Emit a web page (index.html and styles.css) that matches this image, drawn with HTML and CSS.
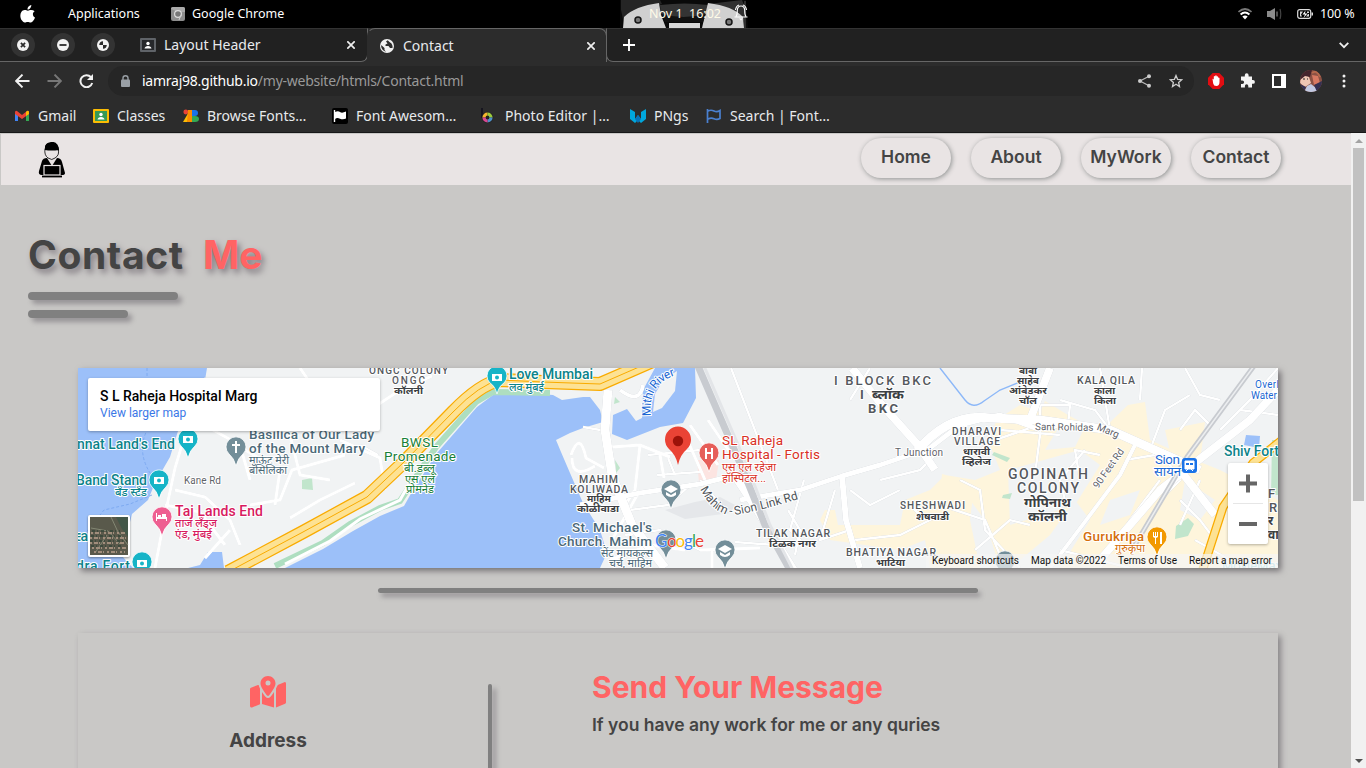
FILE: index.html
```html
<!DOCTYPE html>
<html lang="en">
<head>
<meta charset="utf-8">
<title>Contact</title>
<link rel="stylesheet" href="styles.css">
</head>
<body>
<div class="desktop">
  <div class="sysbar">
    <svg class="apple" width="16" height="18" viewBox="0 0 16 18"><path fill="#fff" d="M11.3 0c.1 1.3-.4 2.400-1.100 3.200-.7.800-1.700 1.400-2.700 1.300-.1-1.200.4-2.400 1.100-3.100C9.300.600 10.400.100 11.300 0zM14.700 6.200c-1.100.700-1.800 1.700-1.800 3 0 1.500.8 2.700 2.100 3.200-.3 1-.8 2-1.400 2.900-.8 1.200-1.600 2.300-2.900 2.300-1.200 0-1.600-.7-3-.7s-1.800.7-2.900.7c-1.300 0-2.200-1.200-3-2.300C.200 13.100-.2 9.600 1.200 7.300c.8-1.400 2.100-2.200 3.500-2.200 1.300 0 2.100.7 3.200.7 1 0 1.700-.7 3.200-.7 1.300 0 2.600.4 3.600 1.100z"/></svg>
    <span class="sys-text apps">Applications</span>
    <svg class="mini-chrome" width="14" height="14" viewBox="0 0 14 14"><rect width="14" height="14" rx="2" fill="#8d8d8d"/><path d="M0 2Q0 0 2 0H12Q14 0 14 2V5H7z" fill="#aaa"/><circle cx="7" cy="7" r="3.400" fill="#777" stroke="#ddd" stroke-width="1.200"/><path d="M10 7.500L8 13" stroke="#ccc"/></svg>
    <span class="sys-text chrome-name">Google Chrome</span>
    <div class="clock">
      <svg class="clock-art" width="130" height="28" viewBox="0 0 130 28"><path d="M0 0H126L128 28H0z" fill="#090909"/><path d="M1 0H40L42 4 12 12 4 24 1 10z" fill="#252525"/><path d="M88 4L122 0 126 10 124 21 118 12z" fill="#303030"/><path d="M40 5Q65 2 88 5L87 17H41z" fill="#343434"/><path d="M3 28L4 17Q15 6 39 3L41 15 46 28zM124 28L123 17Q113 6 88 3L85 15 82 28z" fill="#d0d0d0"/><path d="M49 28V23H80V28z" fill="#d8d8d8"/><path d="M41 14Q64 20 86 14L83 22H45z" fill="#111"/><g fill="#777" stroke="#151515" stroke-width="1.500"><circle cx="18" cy="20" r="3"/><circle cx="109" cy="22" r="3"/></g><path d="M125 1V28" stroke="#555"/></svg>
      <span class="clock-text">Nov 1&nbsp; 16:02</span>
      <svg class="bell" width="14" height="17" viewBox="0 0 14 17"><path d="M2 12.500Q3.300 11 3.300 6.500Q3.500 2 7 2t3.700 4.500Q10.700 11 12 12.500M.5 13H13.500M5 1Q2 2 1.500 6M9 1Q12 2 12.500 6" fill="none" stroke="#fff" stroke-width="1.100"/><path d="M5 14.500H9L7 16.500z" fill="#fff"/></svg>
    </div>
    <div class="tray">
      <svg width="14" height="12" viewBox="0 0 14 12"><path d="M.5 4Q7-2 13.500 4" fill="none" stroke="#777" stroke-width="1.700"/><path d="M2.600 6.500Q7 2.500 11.400 6.500" fill="none" stroke="#fff" stroke-width="2"/><path d="M4.300 8.500Q7 6.300 9.700 8.500L7 11.500z" fill="#fff"/></svg>
      <svg width="15" height="12" viewBox="0 0 15 12"><path d="M0 3H3L8 0V12L3 9H0z" fill="#8a8a8a"/><path d="M10 3.500V8.500" stroke="#777" stroke-width="1.300"/><path d="M13 1Q14.500 6 13 11" stroke="#444" fill="none" stroke-width="1.200"/></svg>
      <svg width="16" height="10" viewBox="0 0 16 10"><rect x=".7" y=".7" width="13" height="8.600" rx="2" fill="none" stroke="#ddd" stroke-width="1.200"/><path d="M14.500 3.500H16V6.500H14.500zM3 2.500H6L4 5.500 5 7.500H3zM12 2.500H10V4H12zM12 7.500H9L11 5H12z" fill="#ddd"/><path d="M8.500 1.500L5.500 5.500H8L6.500 9L10.500 4.500H8z" fill="#fff"/></svg>
      <span class="sys-text pct">100 %</span>
    </div>
  </div>

  <div class="tabs">
    <div class="strip left-strip">
      <span class="winbtn"><svg width="12" height="12" viewBox="0 0 12 12"><circle cx="6" cy="6" r="6" fill="#f3f3f3"/><path d="M3.900 3.900l4.200 4.200M8.100 3.900L3.900 8.100" stroke="#2b2b2b" stroke-width="1.700"/></svg></span>
      <span class="winbtn"><svg width="12" height="12" viewBox="0 0 12 12"><circle cx="6" cy="6" r="6" fill="#f3f3f3"/><path d="M2.500 6h7" stroke="#2b2b2b" stroke-width="1.800"/></svg></span>
      <span class="winbtn"><svg width="12" height="12" viewBox="0 0 12 12"><circle cx="6" cy="6" r="6" fill="#f3f3f3"/><path d="M6 2.200V6H2.200A4 4 0 0 1 6 2.200zM6 6H9.800A4 4 0 0 1 6 9.800z" fill="#2b2b2b"/></svg></span>
      <svg class="tab-ico1" width="16" height="14" viewBox="0 0 16 14"><rect width="16" height="14" rx="1" fill="#5f6368"/><rect x="2" y="2" width="12" height="10" fill="#26282b"/><circle cx="8" cy="5.500" r="1.700" fill="#fff"/><path d="M4.500 10.500Q5 8 8 8t3.500 2.500z" fill="#fff"/></svg>
      <span class="ui-text tab-title">Layout Header</span>
      <svg class="tab-x" width="8" height="8" viewBox="0 0 8 8"><path d="M.3.300l7.400 7.400M7.700.300L.3 7.700" stroke="#eee" stroke-width="1.700"/></svg>
    </div>
    <div class="active-tab">
      <svg width="14" height="14" viewBox="0 0 14 14"><circle cx="7" cy="7" r="7" fill="#f0f0f0"/><path d="M7.700 1.200L6 2.500 7.500 4.500 5.500 5.500V7H8.500L10 9H12.500Q13 7 11.500 4.500L9.500 3zM1.200 6L4.500 9V11L6 12.700Q2 11.500 1.200 8z" fill="#2c2c2c"/></svg>
      <span class="ui-text tab-title2">Contact</span>
      <svg width="8" height="8" viewBox="0 0 8 8"><path d="M.3.300l7.400 7.400M7.700.300L.3 7.700" stroke="#eee" stroke-width="1.700"/></svg>
    </div>
    <div class="strip right-strip">
      <svg width="12" height="12" viewBox="0 0 12 12"><path d="M6 0V12M0 6H12" stroke="#fff" stroke-width="1.900"/></svg>
      <svg width="10" height="7" viewBox="0 0 10 7"><path d="M.7.900L5 5.200 9.300.900" fill="none" stroke="#eee" stroke-width="1.800"/></svg>
    </div>
  </div>

  <div class="toolbar">
    <svg class="nav-ico" width="15" height="14" viewBox="0 0 15 14"><path d="M7.500.600L1.200 7l6.300 6.400M1.500 7H14.500" fill="none" stroke="#f1f1f1" stroke-width="1.900"/></svg>
    <svg class="nav-ico" width="15" height="14" viewBox="0 0 15 14"><path d="M7.500.600L13.800 7l-6.300 6.400M13.500 7H.500" fill="none" stroke="#777" stroke-width="1.900"/></svg>
    <svg class="nav-ico" width="15" height="14" viewBox="0 0 15 14"><path d="M12 3.200A6 6 0 1 0 13.200 9" fill="none" stroke="#f1f1f1" stroke-width="2"/><path d="M14 0V6H8z" fill="#f1f1f1"/></svg>
    <div class="omnibox">
      <svg width="9" height="12" viewBox="0 0 9 12"><rect y="4.500" width="9" height="7.500" rx="1" fill="#9aa0a6"/><path d="M2 5V3Q2 .800 4.500.800T7 3V5" fill="none" stroke="#9aa0a6" stroke-width="1.400"/></svg>
      <span class="ui-text url">iamraj98.github.io<i>/my-website/htmls/Contact.html</i></span>
      <svg width="13" height="14" viewBox="0 0 13 14"><path d="M11 2.200L2 7l9 4.800" fill="none" stroke="#bbb" stroke-width="1.200"/><g fill="#ccc"><circle cx="11" cy="2.200" r="2"/><circle cx="2" cy="7" r="2"/><circle cx="11" cy="11.800" r="2"/></g></svg>
      <svg class="star" width="14" height="14" viewBox="0 0 14 14"><path d="M7 1.500l1.600 3.800 4.100.4-3.100 2.700.9 4.100L7 10.300l-3.500 2.200.9-4.100L1.300 5.700l4.100-.4z" fill="none" stroke="#ccc" stroke-width="1.300"/></svg>
    </div>
    <svg class="ext1" width="16" height="16" viewBox="0 0 16 16"><path d="M4.700 0h6.600L16 4.700v6.600L11.300 16H4.700L0 11.300V4.700z" fill="#e20d12"/><path d="M4.500 6q.7-.5 1.100.3l.2 1V3.500q.8-.8 1.400 0V2.800q.8-.9 1.500 0v.7q.8-.7 1.400.2v1q1-.5 1.400.3V9Q11.500 13 8.300 13 5.600 13 5.200 10.500z" fill="#fff"/></svg>
    <svg class="ext2" width="15" height="15" viewBox="0 0 15 15"><path d="M1 3.500H4.800V2.200a1.900 1.900 0 0 1 3.800 0V3.500H12V7h1a1.900 1.900 0 0 1 0 3.800H12V14.500H8.300V13a1.700 1.700 0 0 0-3.400 0v1.500H1V11h1.300a1.800 1.800 0 0 0 0-3.600H1z" fill="#f4f4f4"/></svg>
    <svg class="ext3" width="14" height="14" viewBox="0 0 14 14"><rect x="1" y="1" width="12" height="12" fill="none" stroke="#fff" stroke-width="2"/><path d="M9 0h5v14H9z" fill="#fff"/></svg>
    <svg class="avatar" width="22" height="22" viewBox="0 0 22 22"><defs><clipPath id="av"><circle cx="11" cy="11" r="11"/></clipPath></defs><g clip-path="url(#av)"><path fill="#8b5144" d="M0 0h22v22H0z"/><path d="M1 7Q5 2 9 7L11 13 5 17 0 13z" fill="#efc6b4"/><path d="M0 0H12L10 7 5 6 0 10z" fill="#45252d"/><path d="M12 5l6 1 2 7-6 2z" fill="#d87962"/><path d="M4 22L7 16 11 14 16 18 18 22z" fill="#c2c9e2"/><path d="M0 14l6 3-2 5H0zM14 15l8-4v11h-5z" fill="#343052"/><path d="M12 3q5-4 8 4" stroke="#b6694d" stroke-width="2" fill="none"/><path d="M3 9h2M7 9h1" stroke="#222"/></g></svg>
    <svg class="dots" width="4" height="14" viewBox="0 0 4 14"><g fill="#f2f2f2"><circle cx="2" cy="2" r="1.500"/><circle cx="2" cy="7" r="1.500"/><circle cx="2" cy="12" r="1.500"/></g></svg>
  </div>

  <div class="bookmarks">
    <div class="bm bm1"><svg width="16" height="16" viewBox="0 0 16 16"><path d="M1 4v9h3V7z" fill="#4285f4"/><path d="M15 4v9h-3V7z" fill="#34a853"/><path d="M1 4.500Q1 2 3 3l5 4 5-4q2-1 2 1.500V6L8 11 1 6z" fill="#ea4335"/><path d="M12 4l1-1q2-1 2 1.500V6l-3 2z" fill="#fbbc04"/></svg><span class="ui-text">Gmail</span></div>
    <div class="bm bm2"><svg width="16" height="16" viewBox="0 0 16 16"><rect y="1" width="16" height="14" rx="1" fill="#fbbc04"/><rect x="2" y="3" width="12" height="10" fill="#379a55"/><circle cx="8" cy="6.500" r="1.700" fill="#fff"/><path d="M4.500 11.500Q5 9 8 9t3.500 2.500z" fill="#fff"/></svg><span class="ui-text">Classes</span></div>
    <div class="bm bm3"><svg width="16" height="16" viewBox="0 0 16 16"><circle cx="2.800" cy="4" r="2.400" fill="#ea4335"/><path d="M7 2h3L4 14H0z" fill="#fbbc04"/><path d="M5 2h4v12H4z" fill="#fb8c00"/><path d="M9 2h3q3 0 3 3t-3 3H9z" fill="#1a73e8"/><path d="M9 8h3q4 0 4 3t-4 3H9z" fill="#34a853"/></svg><span class="ui-text">Browse Fonts…</span></div>
    <div class="bm bm4"><svg width="16" height="16" viewBox="0 0 16 16"><rect width="16" height="16" rx="2" fill="#000"/><path d="M2.500 2v12" stroke="#fff" stroke-width="1.400"/><path d="M3 4q3-1.500 5 0t6-.5v7q-3 1.500-6 .2T3 11z" fill="#fff"/></svg><span class="ui-text">Font Awesom…</span></div>
    <div class="bm bm5"><svg width="16" height="16" viewBox="0 0 16 16"><path d="M1 0V10" stroke="#16151f" stroke-width="2"/><circle cx="6.500" cy="9.500" r="5.800" fill="#222"/><g fill="none" stroke-width="3.200"><path d="M3 9.500A3.500 3.500 0 0 1 6.500 6" stroke="#f3b52d"/><path d="M6.500 6A3.500 3.500 0 0 1 10 9.500" stroke="#9ccc3c"/><path d="M10 9.500A3.500 3.500 0 0 1 6.500 13" stroke="#4e90c9"/><path d="M6.500 13A3.500 3.500 0 0 1 3 9.500" stroke="#d84792"/></g></svg><span class="ui-text">Photo Editor |…</span></div>
    <div class="bm bm6"><svg width="16" height="16" viewBox="0 0 16 16"><path d="M0 1l5 3v7l3-4 3 4V4l5-3v10l-5 4-3-3-3 3-5-4z" fill="#00a6dc"/><path d="M5 11l3-4 3 4-3 4z" fill="#0872b9"/></svg><span class="ui-text">PNgs</span></div>
    <div class="bm bm7"><svg width="16" height="16" viewBox="0 0 16 16"><path d="M1.500 1v14M2 3q3-1.500 6 0t6-.5v8q-3 1.500-6 .2T2 11" fill="none" stroke="#4a80d0" stroke-width="1.700"/></svg><span class="ui-text">Search | Font…</span></div>
  </div>

  <div class="viewport">
    <div class="page">
      <header class="site-head">
        <svg class="logo" width="28" height="36" viewBox="0 0 28 36"><path d="M7 8Q6 1 13 0t8 8l-1 2H8z"/><path d="M7 7Q6 13 10 16t7 0Q22 13 20 7" fill="#e9e4e4" stroke="#000" stroke-width=".8"/><path d="M7 8Q6 1 12 1 20-1 21 8Q13 9 7 8z"/><path d="M9 16L14 24 19 16Q23 16 24 20L27 31Q27 33 24 33H4Q0 33 1 29L4 19Q5 16 9 16z"/><rect x="6" y="23.500" width="16" height="9.500" fill="#000" stroke="#e9e4e4" stroke-width="1.200"/><path d="M4 34.500H24" stroke="#000" stroke-width="1.800"/></svg>
        <nav class="nav"><a>Home</a><a>About</a><a>MyWork</a><a>Contact</a></nav>
      </header>
      <main class="content">
        <h1 class="title"><span class="t-contact">Contact</span><em>Me</em></h1>
        <div class="bar bar-a"></div>
        <div class="bar bar-b"></div>

        <section class="map">
          <svg class="map-art" width="1200" height="200" viewBox="78 368 1200 200">
            <rect x="78" y="368" width="1200" height="200" fill="#f1f3f4"/>
            <!-- built-up areas -->
            <g fill="#fef5dc">
              <path d="M996 420L1020 405 1040 412 1045 401 1068 415 1100 432 1128 405 1145 402 1150 440 1190 458 1220 470 1278 500 1278 568 1060 568 1090 520 1075 500 1050 535 1020 560 1000 568 985 520 970 500 975 480 1000 470 990 445z"/>
              <path d="M825 510L835 510 838 525 900 525 905 500 930 490 945 475 975 480 970 520 980 568 930 568 925 540 900 550 865 545 830 540 820 520zM942 474l12 3-4 8-9-2zM1165 430l40-8-5 40-30-10z"/>
            </g>
            <g fill="#f1f3f4"><path d="M1008 470L1080 450 1100 465 1075 505 1010 525zM1060 425l25 2-10 20-30 3zM1185 480l30 20-15 20-20-10zM1110 500l30-10-10 25-30 10z"/></g>
            <path d="M665 510l30-8 25-5 15 8-5 8-45 6z" fill="#e5e7ea"/>
            <path d="M697 460l22 0-3 20-17 3z" fill="#fce4e1"/>
            <g fill="#c1e5cc"><path d="M302 480l10-2 1 12-11-1z"/><path d="M994 452l16 6-3 4-15-7zM1003 495l9-2-2 6-8-1zM1176 526l12-8 6 6-6 12-13 3zM1272 440h6v55h-7zM615 397l5 5-6 2zM615 460l5 8-4 5z"/></g>
            <!-- water -->
            <g fill="#9cc0f9">
              <path d="M78 368H207L205 380 195 390 178 431 170 457 155 483 148 500 132 514 128 530 130 545 122 556 133 568H78z"/>
              <path d="M188 568L200 565 208 552 222 552 224 568z"/>
              <path d="M285 568L323 549 353 531 380 516 404 506 413 490 437 453 477 407 493 395 513 392 553 395 562 400 583 397 590 397 600 410 603 422 583 428 570 433 556 440 561 452 570 473 583 503 600 530 607 553 600 568z"/>
              <path d="M613 415L627 409 636 421 642 418 643 390 655 368H695L696 398 683 423 660 427 627 440 612 434z"/>
              <path d="M1246 435l14 1-1 12-15-3z"/>
            </g>
            <path d="M677 371L675 391 662 408 653 412 655 394 663 380z" fill="#f1f3f4"/>
            <g fill="none" stroke="#76a5ef" stroke-width=".8" stroke-dasharray="3 2"><path d="M147 368V430Q135 455 155 480M152 495L130 504 104 510 80 540"/></g>
            <path d="M940 368L965 400Q973 410 984 401L1000 390 1020 382" fill="none" stroke="#8db8f8" stroke-width="1.400"/>
            <!-- minor streets -->
            <g class="streets-case">
              <path id="streets" d="M206 378L190 418 175 468 165 515 155 568M175 490L205 497 230 520 240 545M230 530L205 558M165 505L200 512 225 545M195 420L240 445 250 480M245 450L280 470 275 505M290 435L300 475 330 480M355 483L320 500 290 518M250 505L280 500 292 470 345 455M340 440L380 458 385 490M300 368L315 390M80 500h0M370 410L400 390 432 376M330 405L375 380M360 445L378 455"/>
              <path d="M571 455Q580 430 586 458L604 468M572 458Q572 480 595 466M583 427L600 430 610 436M612 447L640 445 670 457M640 445L635 490 625 505M660 455L664 478M668 458L675 475M657 475L700 472M648 455L700 450M683 430L705 480M690 425L718 465M708 420L735 460M640 490L612 540M630 510L668 505 690 485M700 480L725 510M610 560L650 545 685 550M625 535L660 530 700 550 760 548M712 548V568M735 542L775 545"/>
              <path d="M731 368L778 490M788 510L800 530 795 555M804 480L790 530 805 545M835 490L820 540 850 530M850 490L870 505 900 490M880 480L920 470 940 450M855 540L900 535 940 515M940 505L985 520 1000 555M960 480L980 490 985 530 1020 568M965 460L995 440 1030 428M1000 430L1060 435M1040 405V435L1035 475M1060 400L1095 410 1110 430M1035 405L1070 405 1068 425 1040 430M1085 450L1060 480 1065 500M1100 455L1075 450 1080 480M1110 430L1100 368M1142 368L1140 400M1150 450L1165 410 1190 395M1130 440L1160 450 1180 480 1160 500M1125 460L1155 455M1180 430L1195 410 1210 425M1240 410L1278 415M1220 430L1250 400 1278 368M1185 368L1200 395 1220 400M1160 480L1130 520 1100 568M1180 500L1200 520 1215 540M1195 540L1230 560M1200 480L1180 525M975 550L1010 520 1030 525M1060 550L1130 568M905 500L925 520M870 368L850 400"/>
            </g>
            <g class="streets"><path d="M206 378L190 418 175 468 165 515 155 568M175 490L205 497 230 520 240 545M230 530L205 558M165 505L200 512 225 545M195 420L240 445 250 480M245 450L280 470 275 505M290 435L300 475 330 480M355 483L320 500 290 518M250 505L280 500 292 470 345 455M340 440L380 458 385 490M300 368L315 390M370 410L400 390 432 376M571 455Q580 430 586 458L604 468M572 458Q572 480 595 466M612 447L640 445 670 457M640 445L635 490 625 505M660 455L664 478M683 430L705 480M690 425L718 465M708 420L735 460M640 490L612 540M610 560L650 545 685 550M700 550L760 548M712 548V568"/></g>
            <!-- main roads -->
            <g class="road"><path d="M608 390L605 430 612 475 632 525 665 568" stroke-width="9"/><path d="M731 470L754 505 775 540 800 580" stroke-width="8"/><path d="M580 505L640 493 700 484 740 474M740 500L800 490 842 476 880 465 930 448 960 425 1000 415 1040 430" stroke-width="5"/><path d="M852 368L882 405 918 445 935 470" stroke-width="8"/><path d="M917 451Q950 412 990 418L1040 420 1110 430 1155 450 1200 470" stroke-width="9"/><path d="M1050 368L1028 425" stroke-width="8"/><path d="M842 476L846 520 860 568" stroke-width="6"/><path d="M1278 390L1250 420 1160 490 1100 560M1180 470L1215 515" stroke-width="8"/><path d="M1050 568L1075 535 1120 475 1135 445M620 390Q640 405 643 385" stroke-width="4"/></g>
            <!-- promenade -->
            <path d="M275 566L323 543 350 524 380 508 400 501 410 486 436 447 476 402 493 392 550 393" fill="none" stroke="#aedec0" stroke-width="6"/>
            <path d="M285 564L330 541 360 519 400 500 409 484" fill="none" stroke="#fff" stroke-width="3"/>
            <!-- expressways -->
            <g fill="none" stroke-linejoin="round"><path id="hw" d="M228 572L303 532 367 497 403 463 453 412Q480 384 500 380L543 382 600 384 655 360" stroke="#f9ab00" stroke-width="14"/><path d="M228 572L303 532 367 497 403 463 453 412Q480 384 500 380L543 382 600 384 655 360" stroke="#fde293" stroke-width="11.500"/><path d="M228 572L303 532 367 497 403 463 453 412Q480 384 500 380L543 382 600 384 655 360" stroke="#f9ab00"/><path d="M1202 572L1223 507 1253 463 1282 440" stroke="#f9ab00" stroke-width="9"/><path d="M1202 572L1223 507 1253 463 1282 440" stroke="#fde293" stroke-width="6.500"/></g>
            <!-- railways -->
            <g fill="none" stroke="#c8cbd0"><path d="M698 366L740 463 765 525 790 570" stroke-width="7"/><path d="M704 366L746 463 770 525 793 570" stroke="#e3e5e8" stroke-width="3"/><path d="M1254 366L1187 457 1132 550" stroke-width="5"/><path d="M1254 366L1187 457 1132 550" stroke="#eceef0" stroke-width="1.500"/></g>

            <!-- labels -->
            <g class="lbl area">
              <text x="369" y="374" textLength="79" font-size="10">ONGC COLONY</text><text x="392" y="384" textLength="33" font-size="10">ONGC</text>
              <text x="579" y="483" textLength="39" font-size="10.500">MAHIM</text><text x="570" y="493" textLength="58" font-size="10.500">KOLIWADA</text>
              <text x="834" y="385" textLength="97" font-size="13">I BLOCK BKC</text><text x="868" y="413" textLength="30" font-size="13" font-weight="700">BKC</text><text x="860" y="399" font-size="13" font-weight="700">I</text>
              <text x="952" y="435" textLength="49" font-size="10">DHARAVI</text><text x="954" y="445" textLength="46" font-size="10">VILLAGE</text>
              <text x="1077" y="384" textLength="58" font-size="10.500">KALA QILA</text>
              <text x="1008" y="479" textLength="80" font-size="14">GOPINATH</text><text x="1017" y="493" textLength="62" font-size="14">COLONY</text>
              <text x="900" y="509" textLength="65" font-size="10">SHESHWADI</text>
              <text x="756" y="537" textLength="74" font-size="10.500">TILAK NAGAR</text><text x="846" y="556" textLength="90" font-size="10.500">BHATIYA NAGAR</text>
              <text x="1268" y="498" font-size="13">F</text><text x="1269" y="512" font-size="13">R</text>
            </g>
            <g class="lbl hindi" fill="#3c4043" font-weight="700" lengthAdjust="spacingAndGlyphs">
              <text x="394" y="394" textLength="29" font-size="10" lengthAdjust="spacingAndGlyphs">कॉलनी</text>
              <text x="587" y="502" textLength="24" font-size="10" lengthAdjust="spacingAndGlyphs">माहिम</text><text x="577" y="512" textLength="42" font-size="10" lengthAdjust="spacingAndGlyphs">कोळीवाडा</text>
              <text x="872" y="399" textLength="32" font-size="13" lengthAdjust="spacingAndGlyphs">ब्लॉक</text>
              <text x="963" y="455" textLength="27" font-size="10" lengthAdjust="spacingAndGlyphs">धारावी</text><text x="962" y="465" textLength="29" font-size="10" lengthAdjust="spacingAndGlyphs">व्हिलेज</text>
              <text x="1019" y="374" textLength="18" font-size="10" lengthAdjust="spacingAndGlyphs">बाबा</text><text x="1017" y="384" textLength="22" font-size="10" lengthAdjust="spacingAndGlyphs">साहेब</text><text x="1009" y="394" textLength="38" font-size="10" lengthAdjust="spacingAndGlyphs">आंबेडकर</text><text x="1019" y="404" textLength="18" font-size="10" lengthAdjust="spacingAndGlyphs">चॉल</text>
              <text x="1094" y="394" textLength="21" font-size="10" lengthAdjust="spacingAndGlyphs">काला</text><text x="1094" y="404" textLength="22" font-size="10" lengthAdjust="spacingAndGlyphs">किला</text>
              <text x="1024" y="507" textLength="47" font-size="13" lengthAdjust="spacingAndGlyphs">गोपिनाथ</text><text x="1028" y="521" textLength="39" font-size="13" lengthAdjust="spacingAndGlyphs">कॉलनी</text>
              <text x="916" y="520" textLength="33" font-size="10" lengthAdjust="spacingAndGlyphs">शेषवाडी</text><text x="769" y="547" textLength="47" font-size="10" lengthAdjust="spacingAndGlyphs">टिळक नगर</text><text x="876" y="566" textLength="29" font-size="10" lengthAdjust="spacingAndGlyphs">भाटिया</text>
              <text x="1268" y="525" font-size="12">र</text><text x="1268" y="539" font-size="12">वा</text>
            </g>
            <g class="lbl" fill="#0c838a" font-weight="500" font-size="14">
              <text x="77" y="449" textLength="98">nnat Land's End</text><text x="76" y="485" textLength="71">Band Stand</text><text x="75" y="541" textLength="13">ea</text><text x="76" y="571" textLength="54">dra Fort</text>
              <text x="509" y="379" textLength="84">Love Mumbai</text><text x="1224" y="456" textLength="55">Shiv Fort</text>
              <text x="115" y="496" textLength="32" font-size="11" lengthAdjust="spacingAndGlyphs">बँड स्टँड</text><text x="509" y="391" textLength="35" font-size="11" lengthAdjust="spacingAndGlyphs">लव मुंबई</text>
            </g>
            <g class="lbl" fill="#d81b60" font-weight="500"><text x="175" y="516" textLength="88" font-size="14">Taj Lands End</text><text x="175" y="527" textLength="42" font-size="11" lengthAdjust="spacingAndGlyphs">ताज लँड्ज</text><text x="175" y="538" textLength="37" font-size="11" lengthAdjust="spacingAndGlyphs">एंड, मुंबई</text></g>
            <g class="lbl" fill="#4b6877" font-weight="500" font-size="13.500"><text x="249" y="439" textLength="125">Basilica of Our Lady</text><text x="249" y="453" textLength="116">of the Mount Mary</text><text x="572" y="532" textLength="80">St. Michael's</text><text x="558" y="546" textLength="94">Church, Mahim</text>
            <g font-size="11" font-weight="400"><text x="249" y="464" textLength="40" lengthAdjust="spacingAndGlyphs">माऊंट मेरी</text><text x="249" y="474" textLength="38" lengthAdjust="spacingAndGlyphs">बॅसिलिका</text><text x="601" y="557" textLength="52" lengthAdjust="spacingAndGlyphs">सेंट मायकल्स</text><text x="609" y="567" textLength="43" lengthAdjust="spacingAndGlyphs">चर्च, माहिम</text></g></g>
            <g class="lbl" fill="#188038"><text x="401" y="447" textLength="37" font-size="13.500">BWSL</text><text x="384" y="461" textLength="72" font-size="13.500">Promenade</text><text x="404" y="472" textLength="31" font-size="11" lengthAdjust="spacingAndGlyphs">बी.डब्लू</text><text x="405" y="483" textLength="30" font-size="11" lengthAdjust="spacingAndGlyphs">एस एल</text><text x="406" y="493" textLength="28" font-size="11" lengthAdjust="spacingAndGlyphs">प्रोमनेड</text></g>
            <g class="lbl" fill="#d93025"><text x="722" y="445" textLength="61" font-size="13.500">SL Raheja</text><text x="722" y="459" textLength="98" font-size="13.500">Hospital - Fortis</text><text x="722" y="471" textLength="54" font-size="11" lengthAdjust="spacingAndGlyphs">एस एल रहेजा</text><text x="722" y="482" textLength="44" font-size="11" lengthAdjust="spacingAndGlyphs">हॉस्पिटल...</text></g>
            <g class="lbl" fill="#1967d2"><text x="1155" y="464" textLength="25" font-size="13.500">Sion</text><text x="1154" y="476" textLength="27" font-size="12" lengthAdjust="spacingAndGlyphs">सायन</text><text x="1255" y="388" textLength="27" font-size="10">Overh</text><text x="1251" y="399" textLength="26" font-size="10">Water</text></g>
            <g class="lbl" fill="#d56e0c"><text x="1083" y="541" textLength="61" font-size="13.500" font-weight="500">Gurukripa</text><text x="1115" y="552" textLength="30" font-size="11" lengthAdjust="spacingAndGlyphs">गुरुकृपा</text></g>
            <g class="lbl" fill="#5f6368" font-size="10"><text x="184" y="484" textLength="37">Kane Rd</text><text x="895" y="456" textLength="48">T Junction</text><path id="rohidas" fill="none" stroke="none" d="M1035 430L1100 431 1122 440"/><text textLength="84"><textPath href="#rohidas">Sant Rohidas Marg</textPath></text><text transform="translate(1098 489) rotate(-55)" textLength="46">90 Feet Rd</text><path id="sionroad" fill="none" stroke="none" d="M700 489Q714 516 735 515Q755 512 806 497"/><text font-size="12" fill="#50555a" textLength="112"><textPath href="#sionroad">Mahim - Sion Link Rd</textPath></text></g>
            <path id="mithi" fill="none" d="M651 416Q647 381 681 374"/><text class="lbl" fill="#1967d2" font-size="12" textLength="52"><textPath href="#mithi">Mithi River</textPath></text>

            <!-- place pins -->
            <g stroke="#fff" stroke-width=".8">
              <path id="pin" d="M188 458Q186 450 181 446A10 10 0 1 1 195 446Q190 450 188 458z" fill="#16b4c7"/>
              <path d="M159 499Q157 491 152 487A10 10 0 1 1 166 487Q161 491 159 499zM142 580Q140 572 135 569A10 10 0 1 1 149 569Q144 572 142 580zM497 394Q495 386 490 383A10 10 0 1 1 504 383Q499 386 497 394z" fill="#16b4c7"/>
              <path d="M162 536Q160 528 155 524A10 10 0 1 1 169 524Q164 528 162 536z" fill="#ee5f91"/>
              <path d="M236 466Q234 458 229 454A10 10 0 1 1 243 454Q238 458 236 466zM671 509Q669 501 664 497A10 10 0 1 1 678 497Q673 501 671 509zM666 559Q664 551 659 547A10 10 0 1 1 673 547Q668 551 666 559zM725 569Q723 561 718 557A10 10 0 1 1 732 557Q727 561 725 569zM1005 580Q1003 572 998 568A10 10 0 1 1 1012 568Q1007 572 1005 580z" fill="#738e99"/>
              <path d="M709 472Q707 464 702 460A10 10 0 1 1 716 460Q711 464 709 472z" fill="#e65e59"/>
              <path d="M1157 556Q1155 548 1150 544A10 10 0 1 1 1164 544Q1159 548 1157 556z" fill="#f29900"/>
            </g>
            <g fill="#fff"><path d="M183 436h10v7h-10zM154 477h10v7h-10zM137 560h10v7h-10zM492 374h10v7h-10zM156 513h1v4h10v4h-1v-2h-9v2h-1zM158 515h3v2h-3zM162 514h4v3h-4z"/><path d="M235 441h2v3h3v2h-3v7h-2v-7h-3v-2h3zM664 489l7-4 7 4-7 4zM666 492l5 3 5-3v3q-5 4-10 0zM718 549l7-4 7 4-7 4zM720 552l5 3 5-3v3q-5 4-10 0zM705 448h2v4h4v-4h2v11h-2v-5h-4v5h-2zM1153 532h1v4h1v-4h1v4h1v-4h1v5l-2 1v6h-1v-6l-2-1zM1160 532h2v12h-2z"/></g>
            <g fill="#16b4c7"><circle cx="188" cy="439.500" r="2"/><circle cx="159" cy="480.500" r="2"/><circle cx="142" cy="563.500" r="2"/><circle cx="497" cy="377.500" r="2"/></g>
            <rect x="1182" y="458" width="15" height="15" rx="3" fill="#1a73e8"/><path d="M1185 461h9v8h-9zM1186 471l2-2M1193 471l-2-2" fill="#fff" stroke="#fff"/><path d="M1186 463h3v2h-3zM1190 463h3v2h-3z" fill="#1a73e8"/>
            <path d="M678 465Q676 455 669 449A13 13 0 1 1 687 449Q680 455 678 465z" fill="#ea4335"/><circle cx="678" cy="441" r="5.200" fill="#9d1209"/>
            <g class="google" font-size="17"><text x="655" y="547" fill="#4285f4">G</text><text x="667" y="547" fill="#ea4335">o</text><text x="675.500" y="547" fill="#fbbc05">o</text><text x="684" y="547" fill="#4285f4">g</text><text x="692" y="547" fill="#34a853">l</text><text x="695" y="547" fill="#ea4335">e</text></g>
            <text class="lbl" x="1222" y="570" textLength="60" font-size="13" fill="#8bccd2">MovieMax</text>
            <path d="M926 554H1278V568H926z" fill="#f5f5f5" opacity=".7"/>
            <g class="legal"><text x="932" y="564" textLength="87">Keyboard shortcuts</text><text x="1031" y="564" textLength="75">Map data ©2022</text><text x="1118" y="564" textLength="59">Terms of Use</text><text x="1189" y="564" textLength="83">Report a map error</text></g>
          </svg>
          <div class="place-card"><b>S L Raheja Hospital Marg</b><span>View larger map</span></div>
          <svg class="sat" width="42" height="42" viewBox="0 0 42 42"><rect width="42" height="42" rx="2" fill="#fff"/><path d="M2 2h38v38H2z" fill="#59594b"/><path d="M2 2H28L34 14 40 22V2z" fill="#435748"/><path d="M23 2l7 15 10 13M3 13l17 3 12 13M7 38l12-18" stroke="#838773" fill="none"/><path d="M3 18h34M2 23h36M2 28h34M4 33h34M6 37h31" stroke="#a18e7c" stroke-width="2" stroke-dasharray="2 2 4 1 1 3"/><path d="M4 16h28M3 21h32M2 26h37M3 31h31" stroke="#35463a" stroke-width="1.500" stroke-dasharray="3 2 1 3"/></svg>
          <div class="zoomer"><svg width="40" height="81" viewBox="0 0 40 81"><path d="M11 20.500h18M20 11.500v18M11 61h18" stroke="#666" stroke-width="4"/><path d="M5 40.500h30" stroke="#e6e6e6"/></svg></div>
        </section>

        <div class="divider"></div>

        <section class="panel">
          <div class="address">
            <svg width="36" height="32" viewBox="0 0 576 512"><path fill="#ff6464" d="M408 120c0 54.600-73.100 151.900-105.200 192c-7.700 9.600-22 9.600-29.600 0C241.100 271.900 168 174.600 168 120C168 53.700 221.700 0 288 0s120 53.700 120 120zM288 152a40 40 0 1 0 0-80 40 40 0 1 0 0 80zM425.600 179.800c26.100-48.500 14.400-29.500 15.900-33.200c.4-1 .8-2 1.200-3l116.400-46.300C558 90.500 576 102.100 576 119V422.800c0 9.800-6 18.600-15.100 22.300L416 503V200.400c3.500-6.900 6.700-13.800 9.600-20.600zM137.600 138.300c2.400 14.100 7.200 28.300 12.800 41.500c2.900 6.800 6.100 13.700 9.600 20.600V451.800L32.900 502.700C17.100 509 0 497.400 0 480.400V209.600c0-9.800 6-18.600 15.100-22.300l122.600-49zM327.800 332c13.900-17.400 35.700-45.700 56.200-77V504.300L192 449.400V255c20.500 31.300 42.300 59.600 56.200 77c20.500 25.600 59.100 25.600 79.600 0z"/></svg>
            <h3>Address</h3>
          </div>
          <div class="vline"></div>
          <div class="message"><h2>Send Your Message</h2><p>If you have any work for me or any quries</p></div>
        </section>
      </main>
    </div>
    <div class="scrollbar"><i class="up"></i><div class="thumb"></div><i class="down"></i></div>
  </div>
</div>
</body>
</html>
```
FILE: styles.css
```css
* { box-sizing: border-box; }
html, body { margin: 0; height: 100%; overflow: hidden; }
svg { display: block; flex: none; }
.desktop { width: 1366px; height: 768px; display: flex; flex-direction: column; background: #2c2c2c; overflow: hidden; }
.desktop > div { flex: none; }

.sysbar { height: 28px; background: #000; display: flex; align-items: center; padding-left: 20px; }
.sys-text { font: 12.500px/28px "Noto Sans", sans-serif; color: #fff; white-space: nowrap; }
.apps { margin-left: 32px; width: 103px; }
.chrome-name { margin-left: 7px; width: 428px; }
.clock { width: 130px; height: 28px; display: grid; align-items: center; }
.clock > * { grid-area: 1 / 1; }
.clock-text { font: 12.500px/28px "Noto Sans", sans-serif; color: #fffbe8; margin-left: 29px; white-space: nowrap; }
.bell { margin-left: 114px; margin-top: -3px; }
.tray { margin-left: auto; display: flex; align-items: center; gap: 15px; padding-right: 11px; }
.pct { width: 35px; margin-left: -8px; letter-spacing: -.1px; }

.tabs { height: 34px; display: flex; background: #2c2c2c; }
.strip { background: #212121; border-top: 1px solid #333; border-bottom: 1px solid #666; display: flex; align-items: center; }
.left-strip { width: 368px; padding-left: 11px; border-bottom-right-radius: 7px; border-right: 1px solid #666; margin-right: -1px; }
.winbtn { width: 24px; height: 24px; border-radius: 50%; background: #333; display: flex; align-items: center; justify-content: center; margin-right: 16px; flex: none; }
.tab-ico1 { margin-left: 9px; }
.ui-text { font: 14px/20px "Noto Sans", sans-serif; color: #e8eaed; white-space: nowrap; }
.tab-title { width: 183px; margin-left: 8px; }
.active-tab { width: 240px; display: flex; align-items: center; border: 1px solid #666; border-bottom: 0; border-left-color: transparent; border-radius: 8px 8px 0 0; padding-left: 12px; background: #2c2c2c; }
.tab-title2 { width: 184px; margin-left: 9px; }
.right-strip { flex: 1; border-left: 1px solid #666; border-bottom-left-radius: 7px; margin-left: -1px; justify-content: space-between; padding: 0 17px 0 16px; }

.toolbar { height: 37px; display: flex; align-items: center; padding-left: 15px; }
.nav-ico { margin-right: 17px; }
.omnibox { width: 1086px; height: 30px; border-radius: 15px; background: #262626; display: flex; align-items: center; padding-left: 13px; margin-left: -3px; }
.url { margin-left: 12px; width: 996px; letter-spacing: -.25px; color: #fff; }
.url i { font-style: normal; color: #999; }
.star { margin-left: 18px; }
.ext1 { margin-left: 14px; }
.ext2 { margin-left: 16px; }
.ext3 { margin-left: 17px; }
.avatar { margin-left: 14px; }
.dots { margin-left: 20px; }

.bookmarks { height: 34px; display: flex; align-items: center; padding-left: 14px; border-bottom: 1px solid #181818; }
.bm { display: flex; align-items: center; gap: 8px; flex: none; }
.bm1 { width: 79px; }
.bm2 { width: 90px; }
.bm3 { width: 149px; }
.bm4 { width: 149px; }
.bm5 { width: 149px; }
.bm6 { width: 76px; }

.viewport { height: 635px; display: flex; background: #c9c8c6; }
.page { width: 1351px; height: 635px; overflow: hidden; font-family: "Inter", sans-serif; color: #444; }
.site-head { height: 51px; margin: 1px 0 0 1px; background: #e9e4e4; display: flex; justify-content: space-between; padding: 4px 70px 0 37px; }
.logo { margin-top: 4px; }
.nav { display: flex; gap: 20px; }
.nav a { width: 90px; height: 40px; border-radius: 20px; font-weight: 600; font-size: 17.500px; line-height: 38px; text-align: center; box-shadow: 1px 1px 5px #8e9190; }
.content { padding: 46px 0 0 28px; }
.title { margin: 0; height: 61px; display: flex; font-weight: 700; font-size: 39px; line-height: 48px; text-shadow: 3px 4px 6px #807a80; }
.t-contact { width: 175px; letter-spacing: .6px; }
.title em { font-style: normal; color: #ff6464; }
.bar { height: 8px; border-radius: 4px; background: #808080; box-shadow: 4px 4px 5px #969396; }
.bar-a { width: 150px; margin-bottom: 10px; }
.bar-b { width: 100px; }
.map { width: 1200px; height: 200px; margin: 50px 0 0 50px; position: relative; box-shadow: 3px 3px 6px #767376; }
.lbl { font-family: Roboto, "Noto Sans", "Noto Sans Devanagari", sans-serif; paint-order: stroke; stroke: #fff; stroke-width: 2px; stroke-linejoin: round; }
.area { fill: #54585d; font-weight: 500; }
.streets-case { fill: none; stroke: #fff; stroke-width: 2.500; filter: drop-shadow(0 0 .5px #bfc4ca); }
.streets { fill: none; stroke: #fff; stroke-width: 3; }
.road { fill: none; stroke: #fff; stroke-linejoin: round; filter: drop-shadow(0 0 .5px #bfc4ca); }
.google { font-family: Lato, sans-serif; paint-order: stroke; stroke: #fff; stroke-width: 1px; }
.legal { font: 10px Roboto, sans-serif; fill: #111; }
.place-card { position: absolute; left: 10px; top: 10px; width: 292px; height: 53px; background: #fff; border-radius: 2px; box-shadow: 0 1px 3px rgba(0,0,0,.3); padding: 9px 12px; font-family: Roboto, sans-serif; display: flex; flex-direction: column; }
.place-card b { font-size: 14px; line-height: 18px; font-weight: 500; color: #000; }
.place-card span { font-size: 12px; line-height: 17px; color: #3b78e7; }
.sat { position: absolute; left: 10px; top: 147px; filter: drop-shadow(0 1px 1px rgba(0,0,0,.4)); }
.zoomer { position: absolute; left: 1150px; top: 95px; width: 40px; height: 81px; background: #fff; border-radius: 2px; box-shadow: 0 1px 3px rgba(0,0,0,.3); }
.divider { width: 600px; height: 5px; margin: 20px 0 0 350px; border-radius: 3px; background: #808080; box-shadow: 3px 4px 5px #969396; }
.panel { width: 1200px; height: 300px; margin: 40px 0 0 50px; display: flex; box-shadow: 3px 3px 6px #888588; }
.address { width: 380px; padding-top: 43px; display: flex; flex-direction: column; align-items: center; }
.address h3 { margin: 20px 0 0; font-size: 19px; line-height: 26px; font-weight: 700; }
.vline { width: 4px; height: 260px; margin: 51px 0 0 30px; border-radius: 3px; background: #808080; box-shadow: 4px 4px 5px #969396; }
.message { margin-left: 100px; padding-top: 35px; }
.message h2 { margin: 0; font-size: 30px; line-height: 38px; font-weight: 700; color: #ff6464; }
.message p { margin: 7px 0 0; font-size: 17.500px; line-height: 24px; font-weight: 600; white-space: nowrap; }

.scrollbar { width: 15px; background: #f1f1f1; display: flex; flex-direction: column; align-items: center; padding: 6px 0 5px; }
.up { border: 4px solid transparent; border-top: 0; border-bottom: 4px solid #a3a3a3; }
.down { border: 4px solid transparent; border-bottom: 0; border-top: 4px solid #505050; margin-top: auto; }
.thumb { width: 11px; height: 353px; background: #c1c1c1; margin-top: 5px; }
```
